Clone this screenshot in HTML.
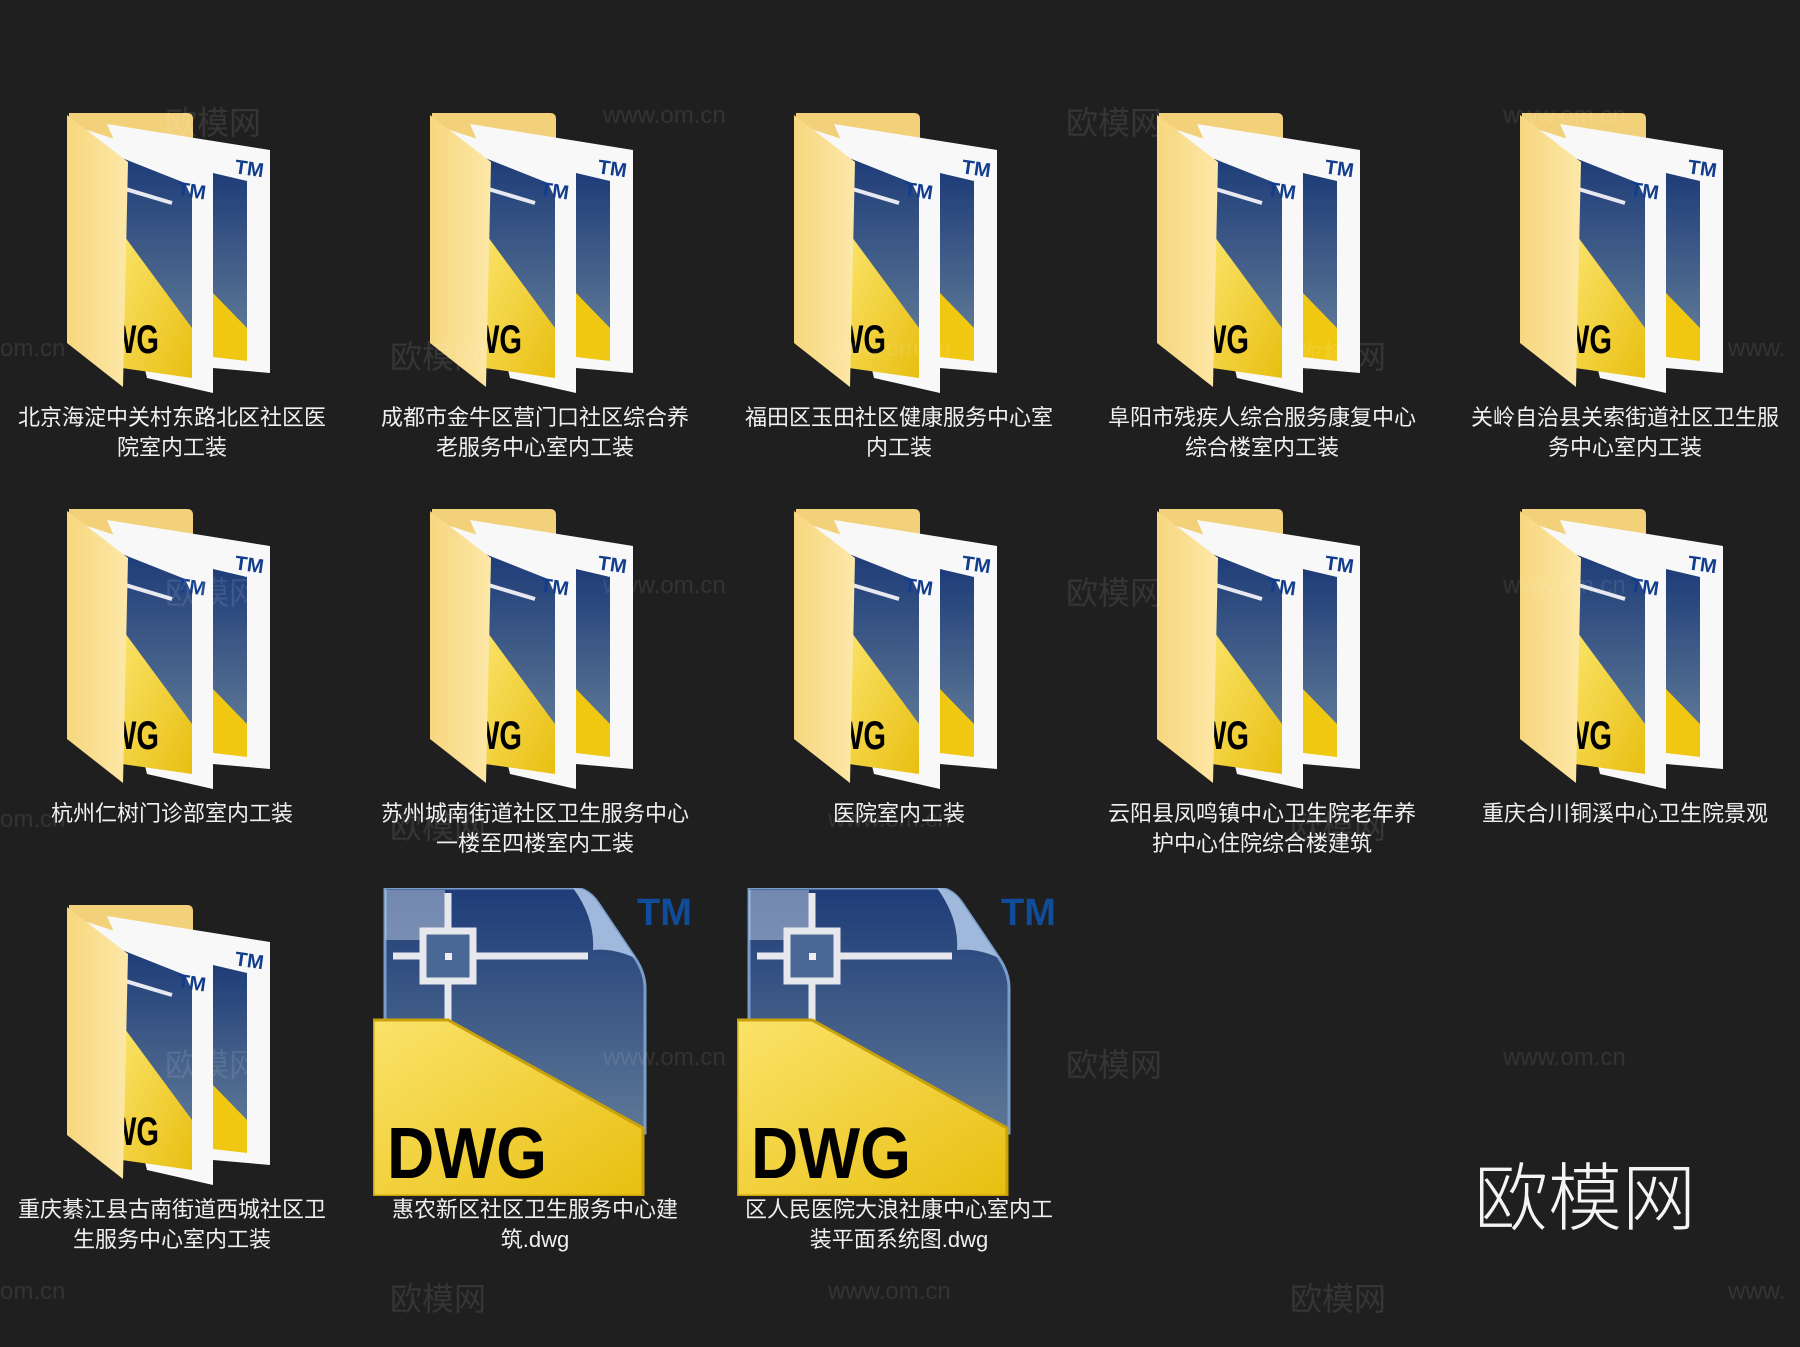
<!DOCTYPE html>
<html><head><meta charset="utf-8"><style>
html,body{margin:0;padding:0}
body{width:1800px;height:1347px;background:#1f1f1f;position:relative;overflow:hidden;font-family:"Liberation Sans","Noto Sans CJK SC",sans-serif}
.it{position:absolute;width:340px;text-align:center}
.it svg{position:absolute}
.lbl{position:absolute;left:0;width:340px;color:#f0f0f0;font-size:22px;line-height:30px;text-align:center}
.wm{position:absolute;color:rgba(255,255,255,0.1);font-size:32px;white-space:nowrap;z-index:5}
.wu{position:absolute;color:rgba(255,255,255,0.09);font-size:24px;white-space:nowrap;z-index:5}
</style></head><body>
<svg width="0" height="0" style="position:absolute">
<defs>
<linearGradient id="fy" x1="0" y1="0" x2="1" y2="0"><stop offset="0" stop-color="#f7d77f"/><stop offset="1" stop-color="#fde8a8"/></linearGradient>
<linearGradient id="bl" x1="0" y1="0" x2="0" y2="1"><stop offset="0" stop-color="#1e3c78"/><stop offset="1" stop-color="#5d7896"/></linearGradient>
<linearGradient id="yl" x1="0" y1="0" x2="1" y2="1"><stop offset="0" stop-color="#fbe36a"/><stop offset="1" stop-color="#e8bf10"/></linearGradient>
<symbol id="fold" viewBox="0 0 204 280">
<path d="M2,0H120Q126,0 126,6V70H2Z" fill="#f2d17a"/>
<polygon points="40,11 203,37 203,260 146,255" fill="#f8f8f8"/>
<polygon points="146,60 180,68 180,220 146,214" fill="url(#bl)"/>
<polygon points="146,180 180,215 180,248 146,244" fill="#f0c812"/>
<text x="168" y="62" font-size="20" font-weight="bold" fill="#123c8c" font-family="Liberation Sans" transform="rotate(8 180 55)">TM</text>
<polygon points="20,17 146,58 146,280 80,265" fill="#f8f8f8"/>
<polygon points="55,45 118,70 125,85 125,225 55,205" fill="url(#bl)"/>
<line x1="55" y1="75" x2="105" y2="90" stroke="#e8e8f0" stroke-width="4"/>
<polygon points="55,120 125,215 125,265 55,255" fill="url(#yl)"/>
<text x="42" y="240" font-size="40" font-weight="bold" fill="#000" font-family="Liberation Sans" textLength="50" lengthAdjust="spacingAndGlyphs">WG</text>
<text x="110" y="84" font-size="20" font-weight="bold" fill="#123c8c" font-family="Liberation Sans" transform="rotate(8 120 78)">TM</text>
<polygon points="0,2 61,49 56,274 0,230" fill="url(#fy)"/>
</symbol>
<symbol id="dwg" viewBox="0 0 281 308">
<path d="M12,0H200Q215,0 225,15L262,70Q272,85 272,100V245H12Z" fill="url(#bl)" stroke="#7a9cc8" stroke-width="3"/>
<path d="M200,0Q215,0 225,15L262,70Q240,60 220,62Q222,30 200,0Z" fill="#9fb8dc"/>
<rect x="12" y="2" width="60" height="50" fill="#c8d4e8" opacity=".5"/>
<line x1="75" y1="5" x2="75" y2="140" stroke="#e6e8ee" stroke-width="7"/>
<line x1="20" y1="68" x2="215" y2="68" stroke="#e6e8ee" stroke-width="7"/>
<rect x="50" y="43" width="50" height="50" fill="#4a6896" stroke="#e6e8ee" stroke-width="7"/>
<rect x="72" y="65" width="7" height="7" fill="#eee"/>
<polygon points="0,132 75,132 270,240 270,308 0,308" fill="url(#yl)" stroke="#c9a10a" stroke-width="3"/>
<text x="14" y="290" font-size="72" font-weight="bold" fill="#000" font-family="Liberation Sans" textLength="160" lengthAdjust="spacingAndGlyphs">DWG</text>
</symbol>
</defs></svg>

<!-- row 1 -->
<div class="it" style="left:2px;top:113px"><svg style="left:65px;top:0" width="204" height="280"><use href="#fold"/></svg><div class="lbl" style="top:290px">北京海淀中关村东路北区社区医<br>院室内工装</div></div>
<div class="it" style="left:365px;top:113px"><svg style="left:65px;top:0" width="204" height="280"><use href="#fold"/></svg><div class="lbl" style="top:290px">成都市金牛区营门口社区综合养<br>老服务中心室内工装</div></div>
<div class="it" style="left:729px;top:113px"><svg style="left:65px;top:0" width="204" height="280"><use href="#fold"/></svg><div class="lbl" style="top:290px">福田区玉田社区健康服务中心室<br>内工装</div></div>
<div class="it" style="left:1092px;top:113px"><svg style="left:65px;top:0" width="204" height="280"><use href="#fold"/></svg><div class="lbl" style="top:290px">阜阳市残疾人综合服务康复中心<br>综合楼室内工装</div></div>
<div class="it" style="left:1455px;top:113px"><svg style="left:65px;top:0" width="204" height="280"><use href="#fold"/></svg><div class="lbl" style="top:290px">关岭自治县关索街道社区卫生服<br>务中心室内工装</div></div>
<!-- row 2 -->
<div class="it" style="left:2px;top:509px"><svg style="left:65px;top:0" width="204" height="280"><use href="#fold"/></svg><div class="lbl" style="top:290px">杭州仁树门诊部室内工装</div></div>
<div class="it" style="left:365px;top:509px"><svg style="left:65px;top:0" width="204" height="280"><use href="#fold"/></svg><div class="lbl" style="top:290px">苏州城南街道社区卫生服务中心<br>一楼至四楼室内工装</div></div>
<div class="it" style="left:729px;top:509px"><svg style="left:65px;top:0" width="204" height="280"><use href="#fold"/></svg><div class="lbl" style="top:290px">医院室内工装</div></div>
<div class="it" style="left:1092px;top:509px"><svg style="left:65px;top:0" width="204" height="280"><use href="#fold"/></svg><div class="lbl" style="top:290px">云阳县凤鸣镇中心卫生院老年养<br>护中心住院综合楼建筑</div></div>
<div class="it" style="left:1455px;top:509px"><svg style="left:65px;top:0" width="204" height="280"><use href="#fold"/></svg><div class="lbl" style="top:290px">重庆合川铜溪中心卫生院景观</div></div>
<!-- row 3 -->
<div class="it" style="left:2px;top:905px"><svg style="left:65px;top:0" width="204" height="280"><use href="#fold"/></svg><div class="lbl" style="top:290px">重庆綦江县古南街道西城社区卫<br>生服务中心室内工装</div></div>
<div class="it" style="left:365px;top:905px"><svg style="left:8px;top:-17px" width="281" height="308"><use href="#dwg"/></svg>
<div style="position:absolute;left:272px;top:-13px;color:#0f4c9a;font-weight:bold;font-size:38px">TM</div>
<div class="lbl" style="top:290px">惠农新区社区卫生服务中心建<br>筑.dwg</div></div>
<div class="it" style="left:729px;top:905px"><svg style="left:8px;top:-17px" width="281" height="308"><use href="#dwg"/></svg>
<div style="position:absolute;left:272px;top:-13px;color:#0f4c9a;font-weight:bold;font-size:38px">TM</div>
<div class="lbl" style="top:290px">区人民医院大浪社康中心室内工<br>装平面系统图.dwg</div></div>

<div class="wm" style="left:165px;top:98px">欧模网</div>
<div class="wu" style="left:603px;top:102px">www.om.cn</div>
<div class="wm" style="left:1066px;top:98px">欧模网</div>
<div class="wu" style="left:1503px;top:102px">www.om.cn</div>
<div class="wu" style="left:0px;top:335px">om.cn</div>
<div class="wm" style="left:390px;top:332px">欧模网</div>
<div class="wu" style="left:828px;top:335px">www.om.cn</div>
<div class="wm" style="left:1290px;top:332px">欧模网</div>
<div class="wu" style="left:1728px;top:335px">www.</div>
<div class="wm" style="left:165px;top:568px">欧模网</div>
<div class="wu" style="left:603px;top:572px">www.om.cn</div>
<div class="wm" style="left:1066px;top:568px">欧模网</div>
<div class="wu" style="left:1503px;top:572px">www.om.cn</div>
<div class="wu" style="left:0px;top:806px">om.cn</div>
<div class="wm" style="left:390px;top:802px">欧模网</div>
<div class="wu" style="left:828px;top:806px">www.om.cn</div>
<div class="wm" style="left:1290px;top:802px">欧模网</div>
<div class="wm" style="left:165px;top:1040px">欧模网</div>
<div class="wu" style="left:603px;top:1044px">www.om.cn</div>
<div class="wm" style="left:1066px;top:1040px">欧模网</div>
<div class="wu" style="left:1503px;top:1044px">www.om.cn</div>
<div class="wu" style="left:0px;top:1278px">om.cn</div>
<div class="wm" style="left:390px;top:1274px">欧模网</div>
<div class="wu" style="left:828px;top:1278px">www.om.cn</div>
<div class="wm" style="left:1290px;top:1274px">欧模网</div>
<div class="wu" style="left:1728px;top:1278px">www.</div>

<div style="position:absolute;left:1474px;top:1148px;color:#f4f4f4;font-size:74px;line-height:90px;font-family:'Noto Sans CJK SC',sans-serif;font-weight:300">欧模网</div>
</body></html>
